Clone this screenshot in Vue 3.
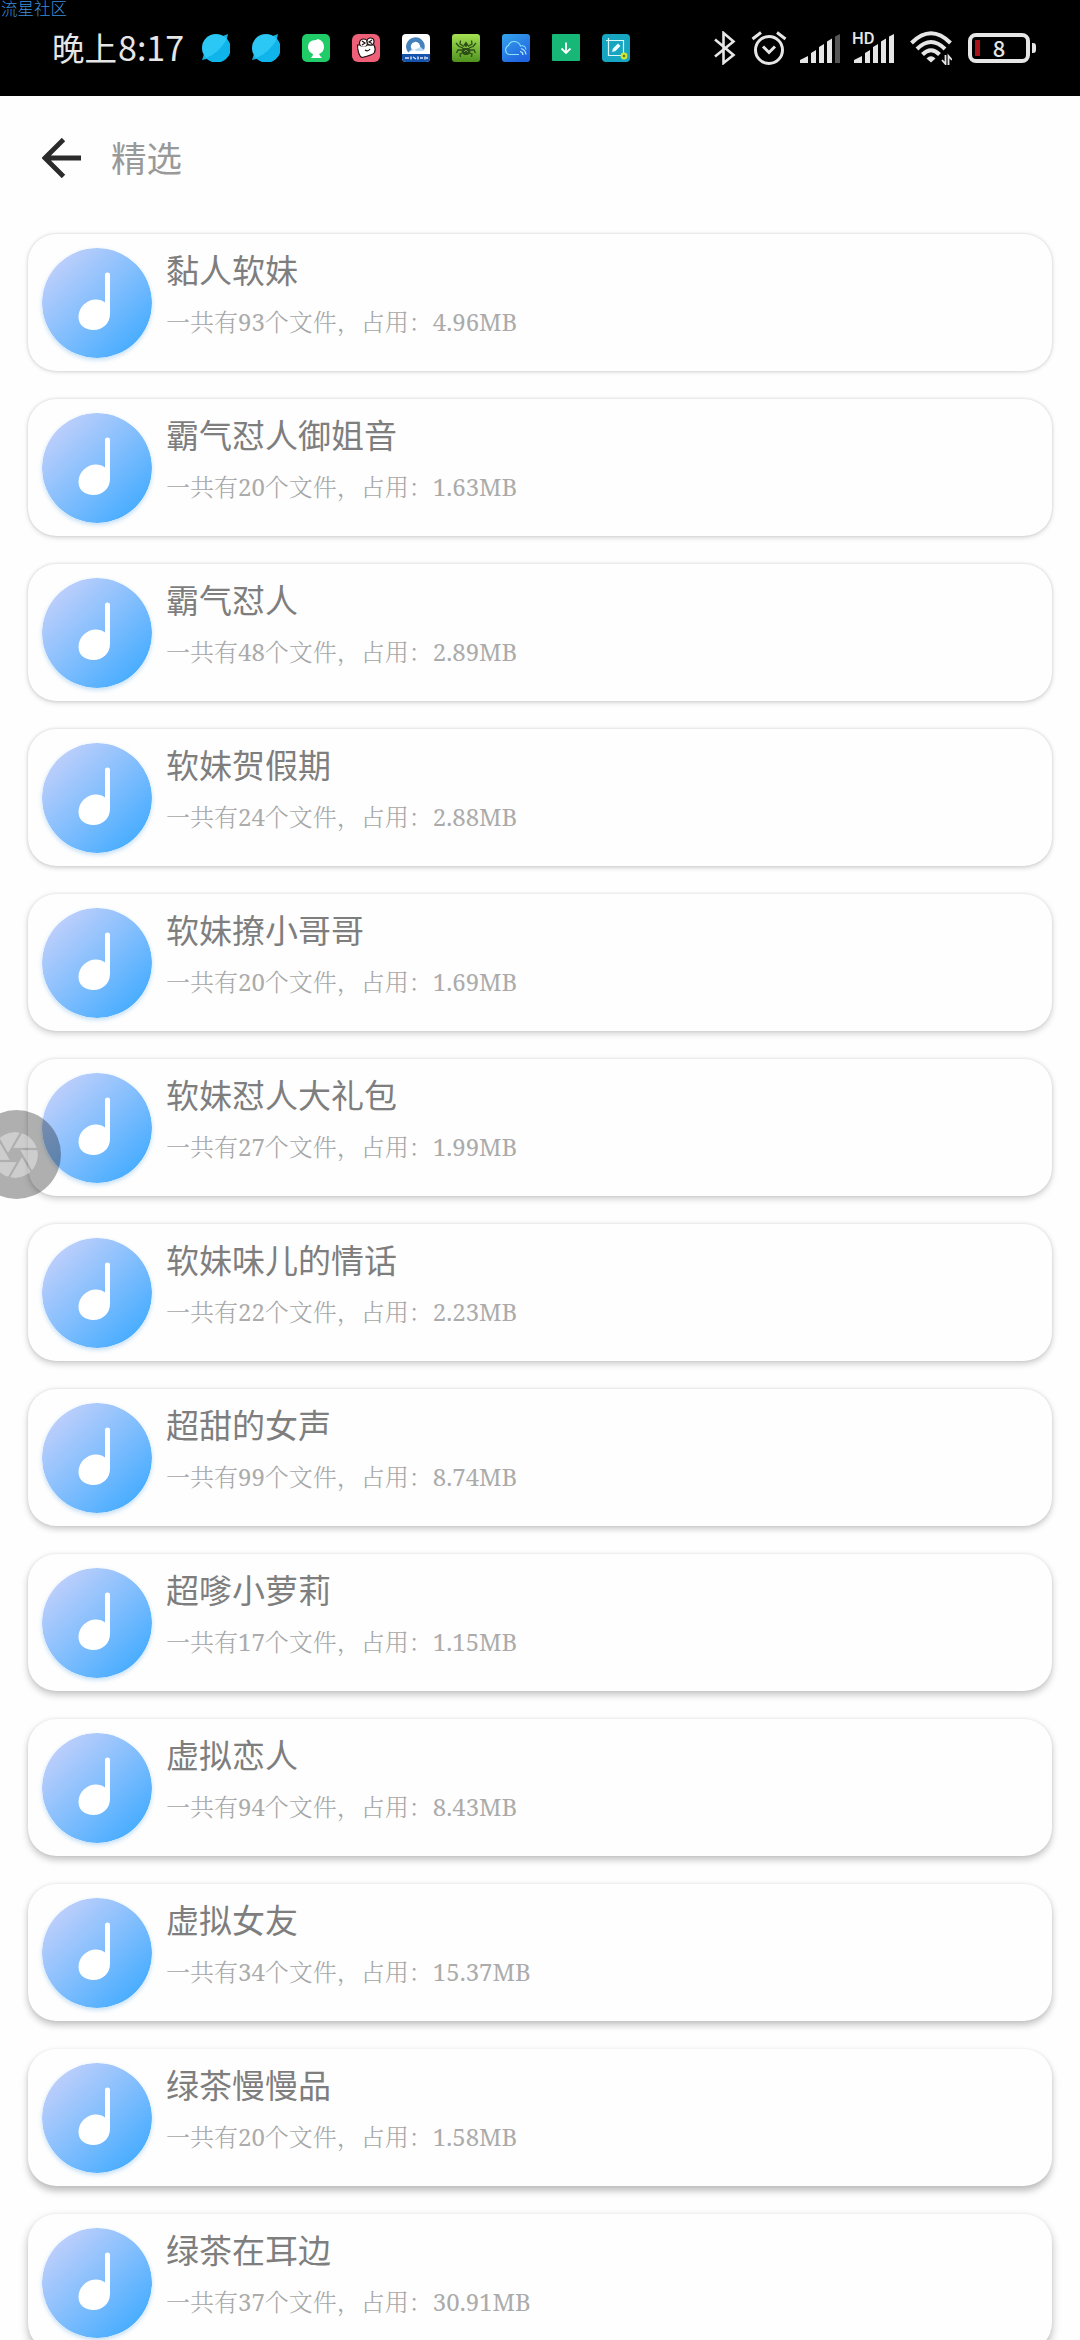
<script setup>
import { ref } from 'vue'

const folders = ref([
  { name: '黏人软妹', count: 93, size: '4.96MB' },
  { name: '霸气怼人御姐音', count: 20, size: '1.63MB' },
  { name: '霸气怼人', count: 48, size: '2.89MB' },
  { name: '软妹贺假期', count: 24, size: '2.88MB' },
  { name: '软妹撩小哥哥', count: 20, size: '1.69MB' },
  { name: '软妹怼人大礼包', count: 27, size: '1.99MB' },
  { name: '软妹味儿的情话', count: 22, size: '2.23MB' },
  { name: '超甜的女声', count: 99, size: '8.74MB' },
  { name: '超嗲小萝莉', count: 17, size: '1.15MB' },
  { name: '虚拟恋人', count: 94, size: '8.43MB' },
  { name: '虚拟女友', count: 34, size: '15.37MB' },
  { name: '绿茶慢慢品', count: 20, size: '1.58MB' },
  { name: '绿茶在耳边', count: 37, size: '30.91MB' }
])

const cardShadow = i => ({
  boxShadow: `0 ${1 + i * 0.28}px ${5 + i * 0.25}px rgba(0, 0, 0, ${0.13 + i * 0.011}), 0 0 3px rgba(0, 0, 0, ${0.12 - i * 0.006})`
})
</script>

<template>
  <main class="screen">
    <header class="status">
      <span class="watermark">流星社区</span>
      <div class="clock"><span class="clock-cn">晚上</span>8:17</div>

      <div class="apps">
        <svg v-for="n in 2" :key="n" viewBox="0 0 28 28">
          <path d="M0 26 L3 17 L9 24Z M26 0 L24 9 L18 3Z" fill="#16aedd" />
          <circle cx="14" cy="14" r="14" fill="#2cc8f5" />
          <path d="M25 5 A14 14 0 0 1 4 24 Q17 19 25 5Z" fill="#0eb4ea" />
        </svg>
        <svg viewBox="0 0 28 28">
          <rect width="28" height="28" rx="5" fill="#20cc68" />
          <path d="M16 5 Q22 7 22 13 Q22 18 17 20 Q18 22 20 24 H9 Q11 22 11 20 Q6 18 6 13 Q6 6 14 6Z" fill="#fff" />
        </svg>
        <svg viewBox="0 0 28 28">
          <rect width="28" height="28" rx="6" fill="#ee6078" />
          <path d="M5.500 11 L22 11 Q24 15 22.500 18.500 Q21 21 10 23.500 Q6 22 5.500 11Z" fill="#fff" stroke="#1b1013" stroke-width="1.2" />
          <circle cx="11.5" cy="9" r="4" fill="#fff" stroke="#1b1013" stroke-width="1.2" />
          <circle cx="18.5" cy="7.5" r="3.5" fill="#fff" stroke="#1b1013" stroke-width="1.2" />
          <path d="M6.500 12.500 H22 V15 H6.500Z" fill="#fff" />
          <path d="M10 7 L13 9 L10 11 M20 6 L17 8 L20 9.500 M13 16 Q16 18 18 15" fill="none" stroke="#1b1013" stroke-width="1.2" />
        </svg>
        <svg viewBox="0 0 28 28">
          <rect width="28" height="28" rx="4" fill="#fff" />
          <path d="M8 17 A7 7 0 1 1 20 15" fill="none" stroke="#4581bb" stroke-width="4.6" />
          <path d="M7 18 Q11 13 14 17 H22 L19 13" fill="#b9dcf5" />
          <path d="M0 20 H28 V24 Q28 28 24 28 H4 Q0 28 0 24Z" fill="#1553ac" />
          <path d="M3 24 H7 M9 22.500 V25.500 M11 23 L14 25 M16 22.500 V25.500 M18 24 H21 M23 22.500 V25.500 M24 24 H26" stroke="#dce9fa" stroke-width="1.4" />
        </svg>
        <svg viewBox="0 0 28 28">
          <defs>
            <linearGradient id="spider" x2="0" y2="1"><stop stop-color="#a6e052" /><stop offset="1" stop-color="#4f921f" /></linearGradient>
          </defs>
          <rect width="28" height="28" rx="3" fill="url(#spider)" />
          <path d="M10.500 14 H17.500 L18.500 18 L16 21 H12 L9.500 18Z" fill="#2c4d18" />
          <path d="M11.500 11 L14 7.500 L16.500 11 L14 13Z" fill="#2c4d18" />
          <path d="M12 18 L14 16 L16 18" fill="none" stroke="#82b84a" stroke-width="0.8" />
          <path d="M12 12.500 L8 10 L8.500 6.500 M16 12.500 L20 10 L19.500 6.500 M11 14 L7 12.500 L4 9 M17 14 L21 12.500 L24 9 M10 16 L6 16 L4.500 19 M18 16 L22 16 L23.500 19 M11 19 L8 20 L8.500 23 M17 19 L20 20 L19.500 23" fill="none" stroke="#2c4d18" stroke-width="1.3" />
        </svg>
        <svg viewBox="0 0 28 28">
          <defs>
            <linearGradient id="cloud" x2="0.6" y2="1"><stop stop-color="#35a5eb" /><stop offset="1" stop-color="#2164e0" /></linearGradient>
          </defs>
          <rect width="28" height="28" rx="3" fill="url(#cloud)" />
          <path d="M17 20.500 H7 A4.800 4.800 0 0 1 6.500 11.500 Q8 7 13 7.500 Q17.500 8.500 18.500 12 Q23.500 11 24 15.500" fill="none" stroke="#8fe0fb" stroke-width="1.1" />
          <path d="M18 17.500 Q21 18 21 21 M19 14.500 Q23.500 16 24 20.500" fill="none" stroke="#b8ecff" stroke-width="1.2" />
        </svg>
        <svg viewBox="0 0 28 28">
          <rect width="28" height="27" rx="1" fill="#17b777" />
          <path d="M14 8.500 V18.500 M9.500 14.500 L14 19 L18.500 14.500" fill="none" stroke="#fff" stroke-width="1.8" />
        </svg>
        <svg viewBox="0 0 28 28">
          <rect width="28" height="28" rx="4" fill="#17a6c2" />
          <path d="M4 6.500 H21.500 V20 M6.500 4 V21.500 H19" fill="none" stroke="#d8f8fa" stroke-width="1.2" />
          <path d="M10 18 L11 14.500 L16 9.500 L18.500 12 L13.500 17Z" fill="#effcff" />
          <circle cx="22" cy="22" r="3.400" fill="#d0e834" />
          <circle cx="22" cy="22" r="1.300" fill="#637d21" />
        </svg>
      </div>

      <div class="system">
        <svg class="bluetooth" viewBox="0 0 22 34" fill="none" stroke="#e6e6e6" stroke-width="2.600">
          <path d="M1 8.500 L19.500 24 L9.500 32 V2 L19.500 10.500 L1 25.500" />
        </svg>
        <svg class="alarm" viewBox="0 0 36 34" fill="none" stroke="#e6e6e6" stroke-width="3">
          <circle cx="18" cy="19" r="13.500" />
          <path d="M12 15.500 L18 21.500 L24 15.500 M1.500 8 L10 1.500 M26 1.500 L34.500 8" />
        </svg>
        <svg class="signal" viewBox="0 0 40 29" fill="#e6e6e6">
          <path d="M0 26 L8 22 V29 H0Z M11 19 L16 16 V29 H11Z M19 13 L24 10 V29 H19Z M27 7.500 L32 4.500 V29 H27Z" />
          <path d="M35 2.500 L40 0 V29 H35Z" fill="#555" />
        </svg>
        <div class="hd">
          <span class="hd-label">HD</span>
          <svg class="signal" viewBox="0 0 40 29" fill="#e6e6e6">
            <path d="M0 26 L8 22 V29 H0Z M11 19 L16 16 V29 H11Z M19 13 L24 10 V29 H19Z M27 7.500 L32 4.500 V29 H27Z M35 2.500 L40 0 V29 H35Z" />
          </svg>
        </div>
        <svg class="wifi" viewBox="0 0 42 34" fill="none" stroke="#e6e6e6" stroke-width="4">
          <path d="M1.500 12 Q21 -7.500 40.500 12 M7 18 Q21 4 35 18 M12.500 23.500 Q21 15 29.500 23.500" />
          <path d="M16.500 27.500 Q21 23 25.500 27.500 L21 31.500Z" fill="#e6e6e6" stroke="none" />
          <path d="M35.500 24 V33 L32 29 M38.500 34 V25 L42 29" stroke-width="1.800" />
        </svg>
        <div class="battery">
          <i class="charge"></i>
          <span class="percent">8</span>
        </div>
        <i class="cap"></i>
      </div>
    </header>

    <nav class="toolbar">
      <svg class="back" viewBox="0 0 40 40" fill="none" stroke="#2b2b2b" stroke-width="4.800">
        <path d="M39 20 H4 M21.500 1.500 L3 20 L21.500 38.500" />
      </svg>
      <h1>精选</h1>
    </nav>

    <section class="list">
      <article v-for="(folder, i) in folders" :key="folder.name" class="card" :style="cardShadow(i)">
        <svg class="disc" viewBox="0 0 110 110">
          <defs>
            <linearGradient id="disc" x1="0.08" y1="0.12" x2="0.83" y2="0.9">
              <stop stop-color="#c2d0fb" />
              <stop offset="0.5" stop-color="#86bffd" />
              <stop offset="1" stop-color="#48adff" />
            </linearGradient>
          </defs>
          <circle cx="55" cy="55" r="55" fill="url(#disc)" />
          <path d="M63 26.500 Q63 24.500 65.500 24.500 Q68 24.500 68 26.500 V66 C68 76 60 82 51.500 82 C43 82 36.500 77 36.500 69 C36.500 59 45 51.500 54 51.500 Q59.500 51.500 63 54.500Z" fill="#fff" />
        </svg>
        <div class="info">
          <h2>{{ folder.name }}</h2>
          <p>一共有<span class="num">{{ folder.count }}</span>个文件，占用：<span class="num">{{ folder.size }}</span></p>
        </div>
      </article>
    </section>

    <div class="floating">
      <svg viewBox="-23 -23 46 46">
        <defs>
          <mask id="blades">
            <circle r="23" fill="#fff" />
            <path d="M-3.500 -6 H3.500 L7 0 L3.500 6 H-3.500 L-7 0Z" fill="#000" />
            <path v-for="n in 6" :key="n" d="M-3.500 -6 H24" stroke="#000" stroke-width="2.200" :transform="`rotate(${n * 60})`" />
          </mask>
        </defs>
        <circle r="23" fill="#fff" fill-opacity="0.38" mask="url(#blades)" />
      </svg>
    </div>
  </main>
</template>

<style>
body {
  margin: 0;
  background: #fefefe;
}
</style>

<style scoped>
* {
  box-sizing: border-box;
  margin: 0;
  padding: 0;
}

.screen {
  position: relative;
  width: 1080px;
  height: 2340px;
  overflow: hidden;
  background: #fefefe;
  font-family: "Noto Sans CJK SC", sans-serif;
}

svg {
  display: block;
  flex: none;
}

.status {
  position: relative;
  display: flex;
  align-items: center;
  height: 96px;
  padding: 0 44px 0 52px;
  background: #000;
  color: #e6e6e6;
}

.watermark {
  position: absolute;
  left: 1px;
  top: 0;
  font-size: 16.5px;
  line-height: 17px;
  font-weight: 300;
  color: #3c8edb;
}

.clock {
  width: 150px;
  padding-bottom: 2px;
  font-size: 34px;
  line-height: 40px;
  white-space: nowrap;
}

.clock-cn {
  margin-right: 1px;
  font-size: 32.5px;
}

.apps {
  display: flex;
  gap: 22px;
}

.apps svg {
  width: 28px;
  height: 28px;
}

.system {
  display: flex;
  align-items: center;
  margin-left: auto;
}

.bluetooth {
  width: 22px;
  height: 34px;
  margin-right: 15px;
}

.alarm {
  width: 36px;
  height: 34px;
  margin-right: 13px;
}

.signal {
  width: 40px;
  height: 29px;
}

.hd {
  position: relative;
  margin: 0 16px 0 14px;
}

.hd-label {
  position: absolute;
  left: -2px;
  top: -2px;
  padding-right: 1px;
  background: #000;
  font-family: Roboto, sans-serif;
  font-size: 16.5px;
  line-height: 13px;
  font-weight: 500;
}

.wifi {
  width: 42px;
  height: 34px;
  margin-right: 16px;
}

.battery {
  position: relative;
  width: 62px;
  height: 30px;
  border: 4px solid #e6e6e6;
  border-radius: 8px;
  text-align: center;
}

.charge {
  position: absolute;
  left: 3px;
  top: 3px;
  width: 5px;
  height: 16px;
  background: #a91118;
}

.percent {
  display: block;
  font-size: 22px;
  line-height: 20px;
  font-weight: 500;
}

.cap {
  width: 4px;
  height: 10px;
  margin-left: 2px;
  border-radius: 0 3px 3px 0;
  background: #e6e6e6;
}

.toolbar {
  display: flex;
  align-items: center;
  height: 124px;
  padding-left: 42px;
}

.back {
  width: 40px;
  height: 40px;
}

h1 {
  margin-left: 29px;
  padding-bottom: 2px;
  font-size: 35.5px;
  line-height: 44px;
  font-weight: 400;
  color: #999;
}

.list {
  display: flex;
  flex-direction: column;
  gap: 28px;
  padding: 14px 28px 0;
}

.card {
  display: flex;
  flex: none;
  height: 137px;
  padding: 14px;
  border-radius: 28px;
  background: #fefefe;
}

.disc {
  width: 110px;
  height: 110px;
  border-radius: 50%;
  box-shadow: 0 2px 4px rgba(60, 150, 220, 0.3);
}

.info {
  margin-left: 14px;
}

h2 {
  font-size: 33px;
  line-height: 42px;
  font-weight: 400;
  color: #7e7e7e;
}

p {
  margin-top: 16px;
  font-family: "Noto Serif", "DejaVu Serif Condensed", "Noto Serif CJK SC", "Noto Sans CJK SC", serif;
  font-size: 24px;
  line-height: 32px;
  font-weight: 300;
  color: #a6a6a6;
  white-space: nowrap;
}

.num {
  font-weight: 400;
  color: #ababab;
}

.floating {
  position: absolute;
  left: -28px;
  top: 1110px;
  display: flex;
  align-items: center;
  justify-content: center;
  width: 89px;
  height: 89px;
  padding-right: 3px;
  border-radius: 50%;
  background: rgba(0, 0, 0, 0.31);
}

.floating svg {
  width: 46px;
  height: 46px;
}
</style>
